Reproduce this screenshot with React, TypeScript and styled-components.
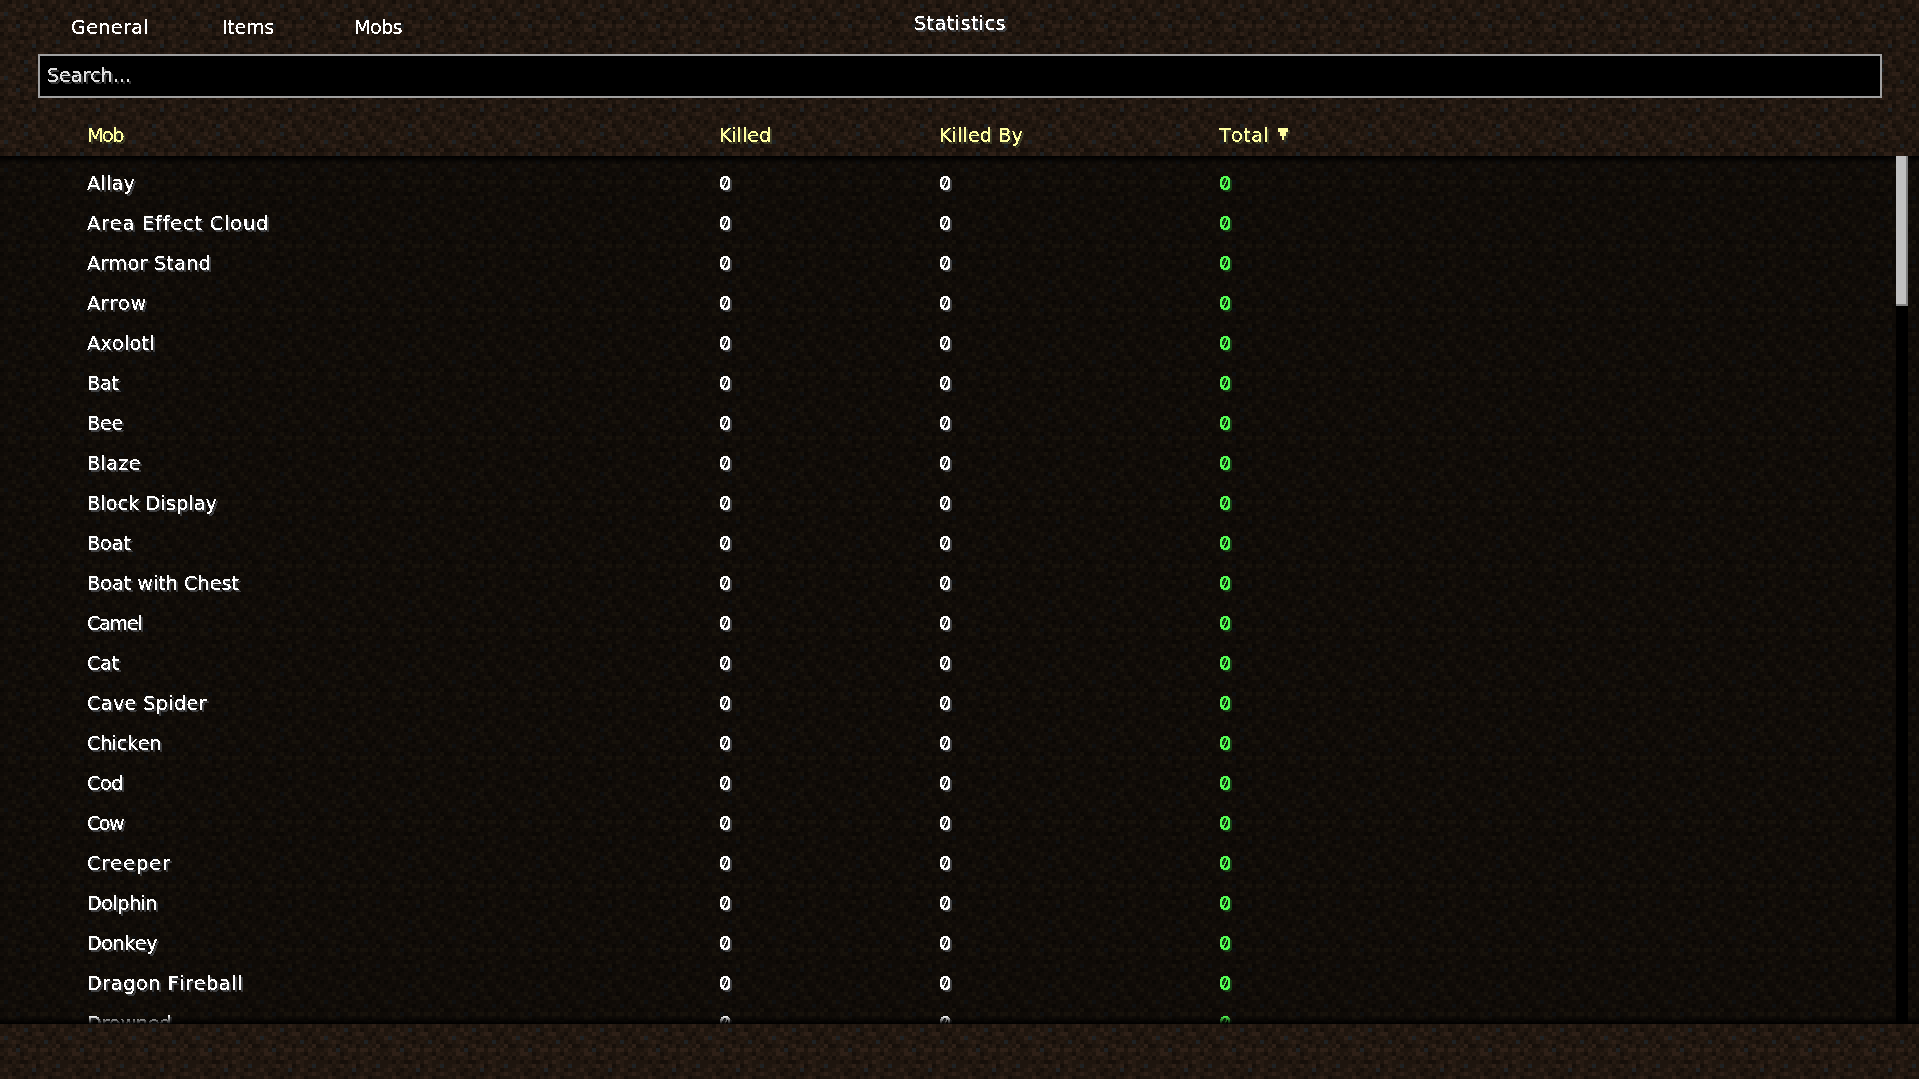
import React, { useLayoutEffect, useRef } from 'react';
import styled, { createGlobalStyle } from 'styled-components';

const FONT = '"DejaVu Sans", Verdana, sans-serif';

/* 16x16 dirt tile: L light, M mid, D dark, K darkest, G stone */
const DIRT = [
  'MDKMDMDDLMDDMLDM',
  'DDMLDMGDDMKDMDDL',
  'DMDDLMDKMLLDDKMM',
  'LGMDDKMMDDMDKMDD',
  'MDMLMDDKDMDGDMKD',
  'KDDMKMLDMKDDMDLK',
  'DMLDGDDLLDLLDLDD',
  'MDLLMKDMDDMDKMMD',
  'KMDDMDLMKDDMLDKM',
  'DDKMDKKDMDLMDDMD',
  'DMMDMLDMLKDMDMGD',
  'MLDDKDMDGDDLMKDD',
  'DDMKDMDDKDMDDMLM',
  'MDLMDDKMDMLMKDDD',
  'KDMDLMDDLDDMDMKM',
  'DMDDMKGLMKDDLDMD',
];

const tile = (palette: Record<string, string>) => {
  const cells = DIRT.map((row, y) =>
    row.split('').map((c, x) => `<rect x="${x}" y="${y}" width="1" height="1" fill="${palette[c]}"/>`).join('')
  ).join('');
  const svg = `<svg xmlns="http://www.w3.org/2000/svg" width="64" height="64" viewBox="0 0 16 16" shape-rendering="crispEdges">${cells}</svg>`;
  return `url("data:image/svg+xml,${encodeURIComponent(svg)}")`;
};

const dirt = tile({ L: '#2e2017', M: '#251a12', D: '#1e150e', K: '#160f0a', G: '#1f2224' });
const darkDirt = tile({ L: '#17120b', M: '#120d09', D: '#0f0b07', K: '#0b0805', G: '#0f1011' });

const GlobalStyle = createGlobalStyle`
  html, body { margin: 0; padding: 0; overflow: hidden; background: #1e150e; }
  * { box-sizing: border-box; }
`;

const Screen = styled.main`
  width: 1919px;
  height: 1079px;
  display: flex;
  flex-direction: column;
  overflow: hidden;
  background: ${dirt};
  color: #fff;
  font: 19.2px/24px ${FONT};
`;

const TopBar = styled.header`
  height: 54px;
  flex: none;
  display: grid;
  grid-template-columns: 915px 1fr;
`;

const Tabs = styled.nav`
  display: grid;
  grid-template-columns: 151px 132px auto;
  padding: 16px 0 0 72px;
  justify-content: start;
`;

const Title = styled.h1`
  margin: 0;
  padding-top: 12px;
  font: inherit;
`;

const SearchBox = styled.div`
  flex: none;
  height: 44px;
  margin: 0 37px 0 38px;
  padding: 8px;
  border: 2px solid #a0a0a0;
  background: #000;
`;

const columns = `
  display: grid;
  grid-template-columns: 632px 220px 280px 1fr;
  padding-left: 88px;
`;

const HeadRow = styled.div`
  ${columns}
  flex: none;
  height: 58px;
  padding-top: 26px;
`;

const TotalHead = styled.div`
  display: flex;
  gap: 9px;
`;

const SortArrow = styled.svg`
  width: 10px;
  height: 12px;
  margin-top: 4px;
  filter: drop-shadow(2px 2px 0 #3f3f28);
`;

const ListPanel = styled.section`
  position: relative;
  flex: none;
  height: 868px;
  display: grid;
  grid-template-columns: 1896px 12px 1fr;
  overflow: hidden;
  background: ${darkDirt};
`;

const Rows = styled.div`
  height: 868px;
  padding-top: 10px;
  overflow: hidden;
`;

const Row = styled.div`
  ${columns}
  height: 40px;
  padding-top: 6px;
`;

const Track = styled.div`
  position: relative;
  z-index: 2;
  background: #000;
`;

const Thumb = styled.div`
  height: 150px;
  background: #c0c0c0;
  border: solid #808080;
  border-width: 0 2px 2px 0;
`;

const EdgeFade = styled.div<{ $edge: 'top' | 'bottom' }>`
  position: absolute;
  left: 0;
  right: 0;
  ${p => p.$edge}: 0;
  height: 8px;
  background: linear-gradient(to ${p => (p.$edge === 'top' ? 'bottom' : 'top')}, #000, transparent);
`;

const Label = styled.span<{ $color?: string; $shadow?: string }>`
  display: block;
  width: max-content;
  height: 24px;
  margin-left: -1px;
  white-space: pre;
  font-kerning: none;
  font-variant-ligatures: none;
  color: ${p => p.$color ?? '#fff'};
  filter: url(#crisp) ${p => (p.$shadow ? `drop-shadow(2px 2px 0 ${p.$shadow})` : '')};
`;

const Digit = styled(Label)`
  font-family: Inter, sans-serif;
  font-weight: 500;
  line-height: 22px;
  font-feature-settings: "zero" 1;
`;

const HiddenDefs = styled.svg`
  position: absolute;
  width: 0;
  height: 0;
`;

const ADVANCE: Record<string, number> = { i: 4, l: 6, t: 8, I: 8, f: 10, k: 10, ' ': 8, '.': 4 };
const pixelWidth = (s: string) => s.split('').reduce((w, c) => w + (ADVANCE[c] ?? 12), 0);

type TextProps = { children: string; color?: string; shadow?: string };

/* Spaces each string so that its width is that of the bitmap font's advances. */
function PixelText({ children, color, shadow }: TextProps) {
  const ref = useRef<HTMLSpanElement>(null);
  useLayoutEffect(() => {
    const el = ref.current;
    if (!el) return;
    el.style.letterSpacing = '0px';
    const natural = el.getBoundingClientRect().width;
    el.style.letterSpacing = `${(pixelWidth(children) - natural) / children.length}px`;
  }, [children]);
  return <Label ref={ref} $color={color} $shadow={shadow}>{children}</Label>;
}

const MOBS = [
  'Allay', 'Area Effect Cloud', 'Armor Stand', 'Arrow', 'Axolotl', 'Bat', 'Bee', 'Blaze',
  'Block Display', 'Boat', 'Boat with Chest', 'Camel', 'Cat', 'Cave Spider', 'Chicken', 'Cod',
  'Cow', 'Creeper', 'Dolphin', 'Donkey', 'Dragon Fireball', 'Drowned',
];

const GRAY = '#3f4042';
const YELLOW = { color: '#ffffa0', shadow: '#3f3f28' };

/* Hard glyph edges: alpha is either on or off. */
function CrispFilter() {
  return (
    <HiddenDefs aria-hidden>
      <filter id="crisp" x="-5%" y="-5%" width="110%" height="115%" colorInterpolationFilters="sRGB">
        <feComponentTransfer>
          <feFuncA type="discrete" tableValues="0 0 0 0 1 1 1 1 1 1" />
        </feComponentTransfer>
      </filter>
    </HiddenDefs>
  );
}

export default function App() {
  return (
    <Screen>
      <GlobalStyle />
      <CrispFilter />
      <TopBar>
        <Tabs>
          <PixelText>General</PixelText>
          <PixelText>Items</PixelText>
          <PixelText>Mobs</PixelText>
        </Tabs>
        <Title><PixelText shadow={GRAY}>Statistics</PixelText></Title>
      </TopBar>
      <SearchBox><PixelText color="#e0e0e0" shadow="#383838">Search...</PixelText></SearchBox>
      <HeadRow>
        <PixelText {...YELLOW}>Mob</PixelText>
        <PixelText {...YELLOW}>Killed</PixelText>
        <PixelText {...YELLOW}>Killed By</PixelText>
        <TotalHead>
          <PixelText {...YELLOW}>Total</PixelText>
          <SortArrow viewBox="0 0 10 12" shapeRendering="crispEdges">
            <path d="M0 0h10v4h-2v4h-2v4h-2v-4h-2v-4h-2z" fill="#ffffa0" />
          </SortArrow>
        </TotalHead>
      </HeadRow>
      <ListPanel>
        <Rows>
          {MOBS.map(name => (
            <Row key={name}>
              <PixelText shadow={GRAY}>{name}</PixelText>
              <Digit $shadow={GRAY}>0</Digit>
              <Digit $shadow={GRAY}>0</Digit>
              <Digit $color="#55ff55" $shadow="#153f15">0</Digit>
            </Row>
          ))}
        </Rows>
        <Track><Thumb /></Track>
        <EdgeFade $edge="top" />
        <EdgeFade $edge="bottom" />
      </ListPanel>
    </Screen>
  );
}
